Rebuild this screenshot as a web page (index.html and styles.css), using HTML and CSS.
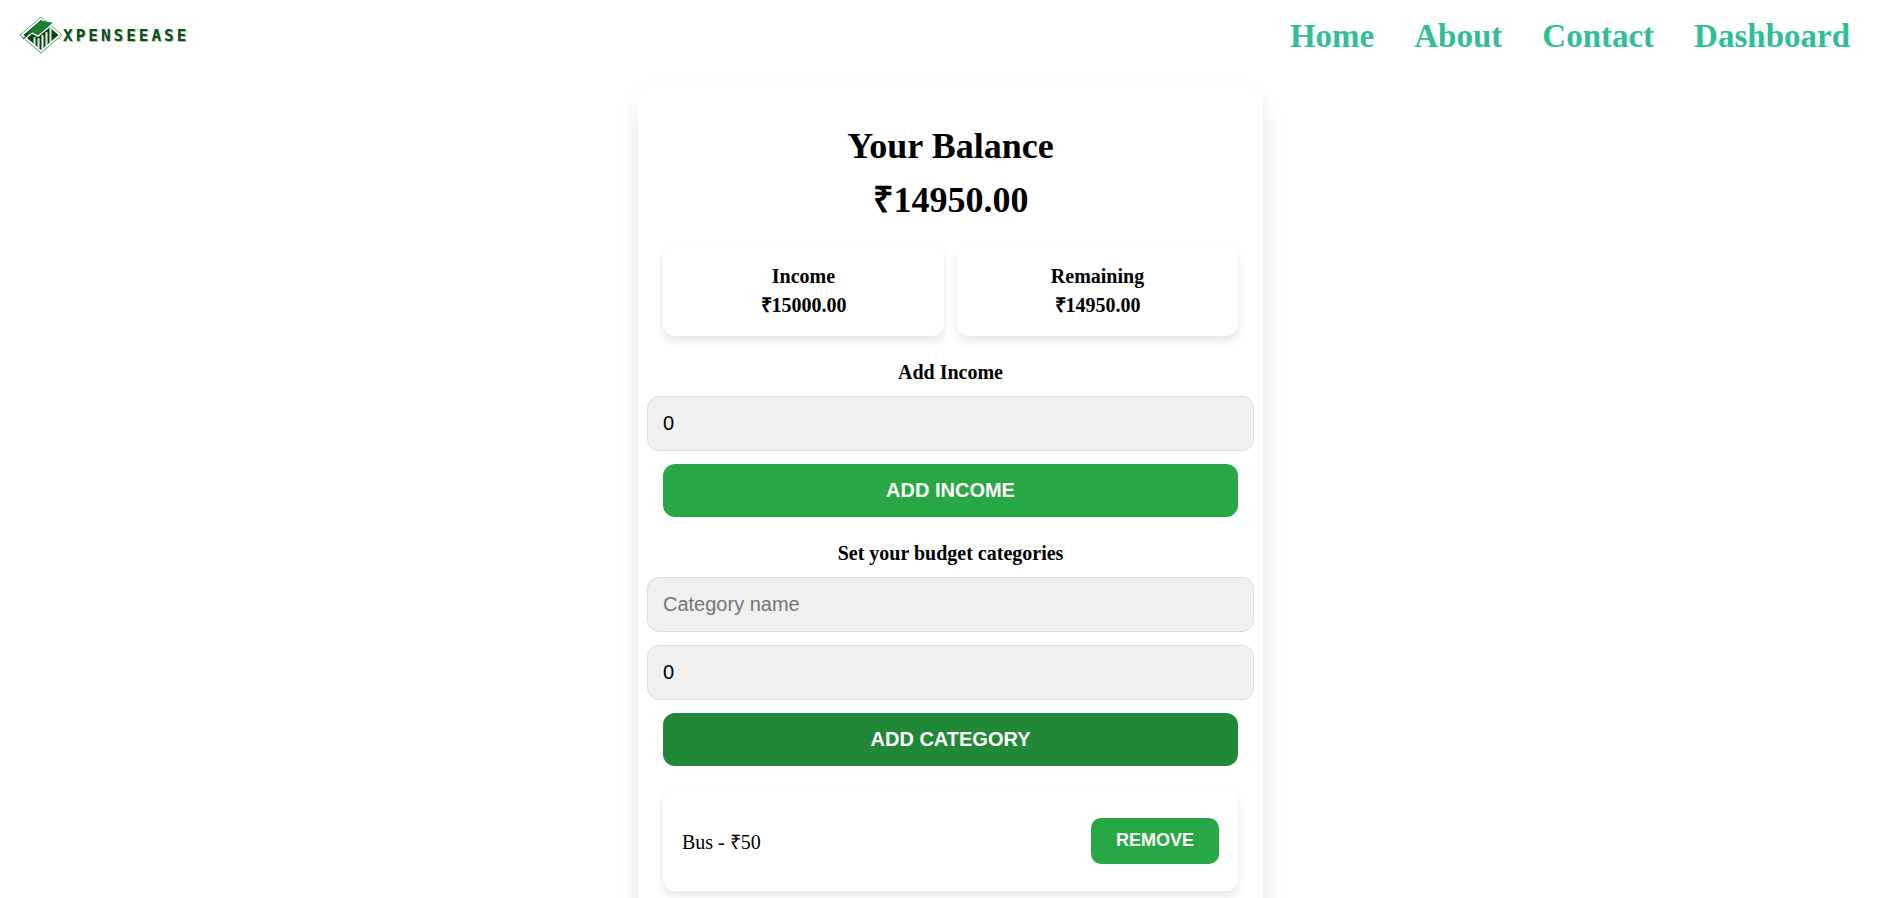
FILE: index.html
```html
<!DOCTYPE html>
<html lang="en">
<head>
<meta charset="utf-8">
<meta name="viewport" content="width=device-width, initial-scale=1">
<title>XpenseEase</title>
<link rel="stylesheet" href="styles.css">
</head>
<body>
<header class="site-header">
  <a class="brand" href="#" aria-label="XpenseEase home">
    <svg class="brand-icon" viewBox="0 0 44 38" aria-hidden="true">
      <path d="M22 1 43 19 22 37 1 19Z" fill="#fff" stroke="#5a9a66" stroke-width=".9"/>
      <path d="M22 4 39.500 19 22 34 4.500 19Z" fill="#0b4019"/>
      <path d="M15.500 21V36M19.500 22V36M23.500 19V36M27.500 16V36M31.500 12V36" stroke="#dfeae1" stroke-width="1.800"/>
      <path d="M22 37 43 19V38H1V19Z" fill="#fff"/>
      <path d="M43 19 22 37 1 19" fill="none" stroke="#5a9a66" stroke-width=".9"/>
      <path d="M15.500 23V29M19.500 23V32M23.500 20V33M27.500 17V30M31.500 13V26" stroke="#dfeae1" stroke-width="1.500"/>
      <path d="M7.500 18 22 4.500 32.500 6.500 19 18 13 15Z" fill="#178030"/>
      <path d="M4 24.500 13 17 19 20 33 8.500" fill="none" stroke="#fff" stroke-width="1.500"/>
      <path d="M4 23 13 15.500 19 18.500 33 6.500" fill="none" stroke="#178030" stroke-width="1.200"/>
    </svg>
    <span class="brand-name">XPENSEEASE</span>
  </a>
  <nav class="site-nav">
    <a href="#">Home</a>
    <a href="#">About</a>
    <a href="#">Contact</a>
    <a href="#">Dashboard</a>
  </nav>
</header>
<main class="page">
  <section class="tracker">
    <h1 class="balance-title">Your Balance</h1>
    <p class="balance-value">₹14950.00</p>
    <div class="summary">
      <div class="summary-card"><h2>Income</h2><p>₹15000.00</p></div>
      <div class="summary-card"><h2>Remaining</h2><p>₹14950.00</p></div>
    </div>
    <form class="entry-form">
      <label class="form-title" for="income">Add Income</label>
      <input class="field" id="income" type="text" inputmode="decimal" value="0">
      <button class="button" type="button">ADD INCOME</button>
    </form>
    <form class="entry-form">
      <label class="form-title" for="category">Set your budget categories</label>
      <input class="field" id="category" type="text" placeholder="Category name">
      <input class="field" type="text" inputmode="decimal" value="0" aria-label="Category budget">
      <button class="button button-active" type="button">ADD CATEGORY</button>
    </form>
    <ul class="categories">
      <li class="category">
        <span>Bus - ₹50</span>
        <button class="button button-small" type="button">REMOVE</button>
      </li>
    </ul>
  </section>
</main>
</body>
</html>
```
FILE: styles.css
```css
* { box-sizing: border-box; }
body {
  margin: 0;
  background: #fff;
  color: #000;
  font-family: "Liberation Serif", "Times New Roman", serif;
  font-size: 20px;
}
h1, h2, p, ul { margin: 0; padding: 0; }
.site-header {
  display: flex;
  justify-content: space-between;
  align-items: flex-start;
  padding: 16px 40px 0 19px;
}
.brand {
  display: flex;
  align-items: center;
  text-decoration: none;
}
.brand-icon { width: 44px; height: 38px; }
.brand-name {
  color: #0b4a23;
  font: bold 16px "DejaVu Sans Mono", monospace;
  letter-spacing: 3px;
  text-shadow: 1px 1px #a9c98f;
}
.site-nav { display: flex; gap: 40px; }
.site-nav a {
  color: #30be96;
  font-size: 33px;
  font-weight: bold;
  line-height: 40px;
  text-decoration: none;
}
.page {
  display: flex;
  justify-content: center;
  padding: 31px 0 32px 11px;
}
.tracker {
  width: 100%;
  max-width: 625px;
  padding: 40px 25px 25px;
  border-radius: 20px;
  background: #fff;
  box-shadow: 0 10px 25px rgba(0, 0, 0, .1);
}
.balance-title, .balance-value {
  font-size: 36px;
  font-weight: bold;
  line-height: 38px;
  text-align: center;
}
.balance-value { margin-top: 16px; }
.summary {
  display: grid;
  grid-template-columns: 1fr 1fr;
  gap: 13px;
  margin-top: 27px;
}
.summary-card {
  display: grid;
  gap: 6px;
  padding: 19px;
  border-radius: 12px;
  background: #fff;
  box-shadow: 0 5px 10px rgba(0, 0, 0, .1);
  font-weight: bold;
  line-height: 23px;
  text-align: center;
}
.summary-card h2 { font-size: 20px; }
.entry-form {
  display: flex;
  flex-direction: column;
  gap: 13px;
  margin-top: 25px;
}
.form-title {
  font-weight: bold;
  line-height: 22px;
  text-align: center;
}
.field {
  margin: 0 -16px;
  padding: 15px;
  border: 1px solid #ddd;
  border-radius: 12px;
  background: #f0f0f0;
  color: #000;
  font: 20px/23px "Liberation Sans", Arial, sans-serif;
}
.field::placeholder { color: #757575; }
.button {
  padding: 15px;
  border: 0;
  border-radius: 12px;
  background: #28a745;
  color: #fff;
  font: bold 20px/23px "Liberation Sans", Arial, sans-serif;
}
.button-active { background: #218838; }
.button-small {
  padding: 12px 25px 13px;
  border-radius: 10px;
  font-size: 18px;
  line-height: 21px;
}
.categories { margin-top: 24px; list-style: none; }
.category {
  display: flex;
  justify-content: space-between;
  align-items: center;
  padding: 28px 19px 27px;
  border-radius: 12px;
  background: #fff;
  box-shadow: 0 5px 10px rgba(0, 0, 0, .1);
}
```
